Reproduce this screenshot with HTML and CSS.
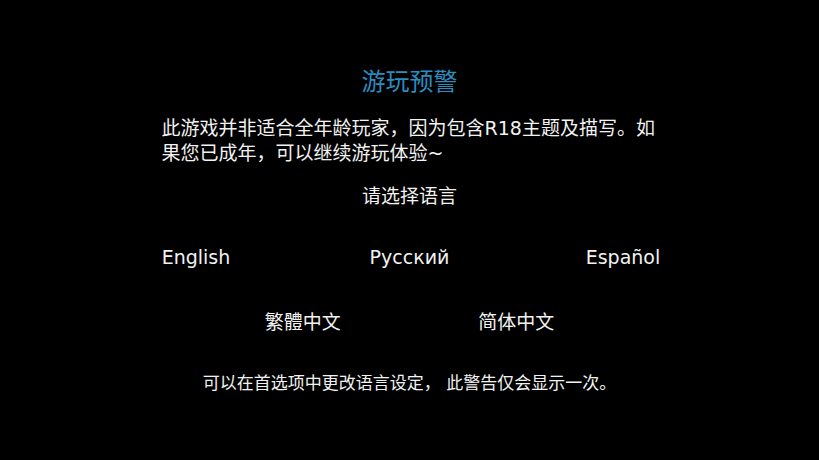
FILE: index.html
```html
<!DOCTYPE html>
<html lang="zh">
<head>
<meta charset="utf-8">
<title>游玩预警</title>
<link rel="stylesheet" href="styles.css">
</head>
<body>
<main class="screen">
  <h1 class="title">游玩预警</h1>
  <p class="notice">此游戏并非适合全年龄玩家，因为包含R18主题及描写。如果您已成年，可以继续游玩体验~</p>
  <p class="prompt">请选择语言</p>
  <div class="langs langs-3">
    <button class="lang">English</button>
    <button class="lang">Русский</button>
    <button class="lang">Español</button>
  </div>
  <div class="langs langs-2">
    <button class="lang">繁體中文</button>
    <button class="lang">简体中文</button>
  </div>
  <p class="footnote">可以在首选项中更改语言设定， 此警告仅会显示一次。</p>
</main>
</body>
</html>
```

FILE: styles.css
```css
html, body {
  margin: 0;
  padding: 0;
  background: #000;
}

.screen {
  width: 819px;
  height: 460px;
  box-sizing: border-box;
  padding-top: 67px;
  display: flex;
  flex-direction: column;
  align-items: center;
  color: #f2f2f2;
  font-family: "DejaVu Sans", "Noto Sans CJK SC", sans-serif;
}

.title {
  margin: 0;
  font-size: 24px;
  line-height: 30px;
  font-weight: normal;
  color: #2a8dc0;
}

.notice {
  margin: 19px 0 0 4px;
  width: 500px;
  font-size: 19px;
  line-height: 25px;
}

.prompt {
  margin: 18px 0 0;
  font-size: 19px;
  line-height: 25px;
}

.langs {
  display: grid;
}

.langs-3 {
  margin-top: 36px;
  grid-template-columns: repeat(3, 213.5px);
}

.langs-2 {
  margin-top: 40px;
  grid-template-columns: repeat(2, 213.5px);
}

.lang {
  background: none;
  border: 0;
  padding: 0;
  color: #f2f2f2;
  font: inherit;
  font-size: 19px;
  line-height: 25px;
  text-align: center;
  cursor: pointer;
}

.footnote {
  margin: 37px 0 0;
  font-size: 17px;
  line-height: 22px;
}
```
